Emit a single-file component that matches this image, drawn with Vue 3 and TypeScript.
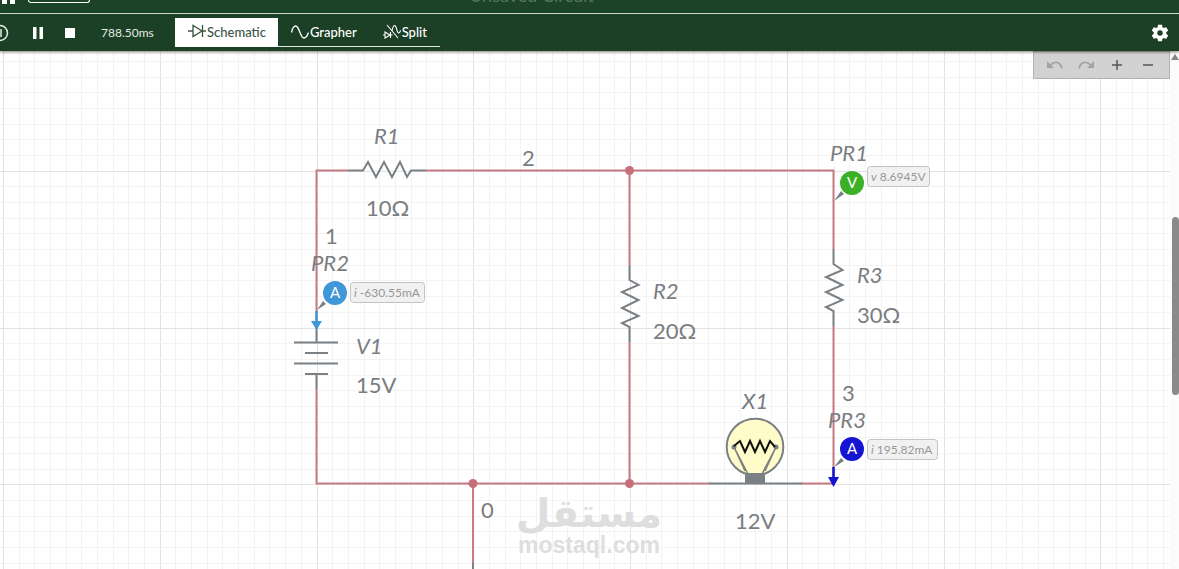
<script setup lang="ts">
import { ref } from 'vue'

interface GridLine { pos: number; major: boolean }
interface Label { text: string; x: number; y: number; name?: boolean }
interface Probe {
  letter: string
  color: string
  x: number
  y: number
  tagX: number
  tagY: number
  tagW: number
  unit: string
  value: string
}

type View = 'schematic' | 'grapher' | 'split'
const view = ref<View>('schematic')

const cell = 156.75 / 10
const gridLines = (start: number, count: number): GridLine[] =>
  Array.from({ length: count }, (_, i) => ({
    pos: Math.round(start + i * cell),
    major: i % 10 === 0,
  }))

const columns = gridLines(3, 240)
const rows = gridLines(14, 140)

const labels: Label[] = [
  { text: 'R1', x: 374, y: 144, name: true },
  { text: '10Ω', x: 366, y: 216 },
  { text: '2', x: 522, y: 166 },
  { text: '1', x: 325, y: 244 },
  { text: 'PR2', x: 311, y: 271, name: true },
  { text: 'V1', x: 356, y: 354, name: true },
  { text: '15V', x: 356, y: 393 },
  { text: 'R2', x: 653, y: 299, name: true },
  { text: '20Ω', x: 653, y: 339 },
  { text: 'PR1', x: 830, y: 161, name: true },
  { text: 'R3', x: 857, y: 283, name: true },
  { text: '30Ω', x: 857, y: 323 },
  { text: '3', x: 842, y: 401 },
  { text: 'PR3', x: 828, y: 428, name: true },
  { text: 'X1', x: 742, y: 409, name: true },
  { text: '12V', x: 735, y: 529 },
  { text: '0', x: 481, y: 518 },
]

const probes: Probe[] = [
  { letter: 'A', color: '#3f97d8', x: 335, y: 293, tagX: 350, tagY: 282, tagW: 74, unit: 'i', value: '-630.55mA' },
  { letter: 'V', color: '#3cb027', x: 852, y: 183, tagX: 867, tagY: 166, tagW: 62, unit: 'v', value: '8.6945V' },
  { letter: 'A', color: '#1414d2', x: 852, y: 449, tagX: 867, tagY: 439, tagW: 70, unit: 'i', value: '195.82mA' },
]
</script>

<template>
  <div class="app">
    <header class="titlebar">
      <svg class="apps" width="16" height="6" viewBox="0 0 16 6" aria-hidden="true">
        <path d="M2 0h5v4H2zM10 0h5v4h-5z" fill="#fff" />
      </svg>
      <span class="plan"></span>
      <h1 class="title">Unsaved Circuit</h1>
    </header>

    <div class="toolbar">
      <button class="tool info" aria-label="Information">
        <svg width="18" height="18" viewBox="0 0 18 18" fill="none" stroke="#e6eee8" stroke-width="1.5">
          <circle cx="9" cy="9" r="7.5" />
          <path d="M10 5v8" />
        </svg>
      </button>
      <button class="tool pause" aria-label="Pause">
        <svg width="10" height="12" viewBox="0 0 10 12" fill="#fff"><path d="M0 0h3.5v12H0zM6.500 0H10v12H6.500z" /></svg>
      </button>
      <button class="tool stop" aria-label="Stop">
        <svg width="10" height="10" viewBox="0 0 10 10" fill="#fff"><path d="M0 0h10v10H0z" /></svg>
      </button>
      <span class="time">788.50ms</span>

      <div class="tabs" role="tablist">
        <button class="tab" role="tab" :class="{ active: view === 'schematic' }" :aria-selected="view === 'schematic'" @click="view = 'schematic'">
          <svg width="18" height="16" viewBox="0 0 18 16" fill="none" stroke="currentColor" stroke-width="1.3">
            <path d="M0 7h5M13 7h5M5 1.500v11L14 7zM14.500 1v12" />
          </svg>
          Schematic
        </button>
        <button class="tab" role="tab" :class="{ active: view === 'grapher' }" :aria-selected="view === 'grapher'" @click="view = 'grapher'">
          <svg width="18" height="16" viewBox="0 0 18 16" fill="none" stroke="currentColor" stroke-width="1.3" stroke-linecap="round">
            <path d="M.7 8C1.600 3.500 3 2 4.700 2c3.800 0 4.400 12 8.200 12 2.200 0 3.500-2.400 4.300-5" />
          </svg>
          Grapher
        </button>
        <button class="tab" role="tab" :class="{ active: view === 'split' }" :aria-selected="view === 'split'" @click="view = 'split'">
          <svg width="18" height="16" viewBox="0 0 18 16" fill="none" stroke="currentColor" stroke-width="1.1">
            <path d="M0 11h2M2 8v6l5-3zM7.500 8v6M7.500 11h2M4 1l11 13M9 7c.8-4 1.400-5.500 2.600-5.500C14 1.500 13.500 9 15.600 9c1 0 1.600-1.200 2-2.500" />
          </svg>
          Split
        </button>
      </div>

      <button class="tool settings" aria-label="Settings">
        <svg width="20" height="20" viewBox="0 0 24 24" fill="#fff">
          <path fill-rule="evenodd" d="M19.430 12.980c.04-.32.07-.64.07-.98s-.03-.66-.07-.98l2.110-1.650c.19-.15.24-.42.12-.64l-2-3.460c-.12-.22-.39-.3-.61-.22l-2.490 1c-.52-.4-1.080-.73-1.690-.98l-.38-2.650C14.460 2.180 14.250 2 14 2h-4c-.25 0-.46.18-.49.42l-.38 2.650c-.61.25-1.170.59-1.690.98l-2.490-1c-.23-.09-.49 0-.61.22l-2 3.460c-.13.22-.07.49.12.64l2.110 1.650c-.04.32-.07.65-.07.98s.03.66.07.98l-2.110 1.650c-.19.15-.24.42-.12.64l2 3.460c.12.22.39.3.61.22l2.490-1c.52.4 1.080.73 1.690.98l.38 2.650c.03.24.24.42.49.42h4c.25 0 .46-.18.49-.42l.38-2.650c.61-.25 1.170-.59 1.690-.98l2.490 1c.23.09.49 0 .61-.22l2-3.460c.12-.22.07-.49-.12-.64zM12 15.300A3.300 3.300 0 1 1 12 8.700a3.300 3.300 0 0 1 0 6.600z" />
        </svg>
      </button>
    </div>

    <main class="workspace">
      <div class="sheet">
        <svg class="circuit" role="img" aria-label="Circuit schematic">
          <g transform="translate(0 -51)">
            <g shape-rendering="crispEdges">
              <line v-for="c in columns" :key="'c' + c.pos" :x1="c.pos + 0.5" :x2="c.pos + 0.5" y1="51" y2="2200" :class="c.major ? 'major' : 'minor'" />
              <line v-for="r in rows" :key="'r' + r.pos" x1="0" x2="3800" :y1="r.pos + 0.5" :y2="r.pos + 0.5" :class="r.major ? 'major' : 'minor'" />
            </g>

            <g class="watermark">
              <text x="589" y="527" class="mark-ar" text-anchor="middle">مستقل</text>
              <text x="589" y="553" class="mark-en" text-anchor="middle">mostaql.com</text>
            </g>

            <g class="wire">
              <path d="M348 170.500H316.500V328M316.500 389V483.500H710M426 170.500H833.500V249M833.500 326V483.500H801M629.500 170.500V266M629.500 342V483.500M473 483.500V563" />
            </g>
            <g fill="#c66f79">
              <circle cx="629.500" cy="170.500" r="4.500" />
              <circle cx="473" cy="483.500" r="4.500" />
              <circle cx="629.500" cy="483.500" r="4.500" />
            </g>

            <g class="part">
              <path d="M348 170.500H363L368 162L376 177L384 162L392 177L400 162L407 177L411 170.500H426" />
              <path d="M629.500 266V280L638.500 285L622 292L638.500 300L622 308L638.500 316L622 323L629.500 327V342" />
              <path d="M833.500 249V264L842.500 270L826 277L842.500 285L826 292L842.500 300L826 307L833.500 311V326" />
              <path d="M316.500 328V342.500M294 342.500H338M305 353H328M294 363.500H338M305 374H328M316.500 374V389" />
              <path d="M709 483.500H802" />
              <path d="M473 563V569" />
            </g>

            <circle cx="755" cy="447" r="28.300" fill="#fffcc9" stroke="#7b8085" stroke-width="2" />
            <path d="M734 447L748 474M776 447L762 474M734 447L745 471M776 447L765 471" stroke="#7b8085" stroke-width="1.500" />
            <circle cx="734" cy="447" r="2.500" fill="#7b8085" />
            <circle cx="776" cy="447" r="2.500" fill="#7b8085" />
            <path d="M734 446L740 441L745 452L750 441L755 452L760 441L765 452L770 441L775 447" fill="none" stroke="#111" stroke-width="2" />
            <path d="M745 473H765V483.500H745z" fill="#7b8085" />

            <path d="M317 310L323 301L326 304z M834 201L841 191L844 194z M834 467L841 458L844 461z" fill="#7b8085" />
            <path d="M316.500 311V323" stroke="#3f97d8" stroke-width="2.500" />
            <path d="M311 321H322L316.500 330z" fill="#3f97d8" />
            <path d="M833.500 467V479" stroke="#1414d2" stroke-width="2.500" />
            <path d="M828 477H839L833.500 487z" fill="#1414d2" />

            <g v-for="p in probes" :key="p.value">
              <circle :cx="p.x" :cy="p.y" r="12" :fill="p.color" />
              <text :x="p.x" :y="p.y + 5" class="letter" text-anchor="middle">{{ p.letter }}</text>
              <rect :x="p.tagX + 0.5" :y="p.tagY + 0.5" :width="p.tagW" height="20" rx="3" fill="#f1f1f1" stroke="#c3c3c3" />
              <text :x="p.tagX + 4" :y="p.tagY + 15" class="reading"><tspan font-style="italic">{{ p.unit }}</tspan>{{ ' ' + p.value }}</text>
            </g>

            <text v-for="l in labels" :key="l.text" :x="l.x" :y="l.y" class="label" :class="{ name: l.name }">{{ l.text }}</text>
          </g>
        </svg>

        <div class="edit">
          <button aria-label="Undo" disabled>
            <svg width="18" height="12" viewBox="0 0 18 12"><path d="M1 2v7h7z" fill="#a3a3a3" /><path d="M4.500 6C8 2 14 2 16 9.500" fill="none" stroke="#a3a3a3" stroke-width="1.800" /></svg>
          </button>
          <button aria-label="Redo" disabled>
            <svg width="18" height="12" viewBox="0 0 18 12"><path d="M17 2v7h-7z" fill="#a3a3a3" /><path d="M13.500 6C10 2 4 2 2 9.500" fill="none" stroke="#a3a3a3" stroke-width="1.800" /></svg>
          </button>
          <button aria-label="Zoom in">
            <svg width="12" height="12" viewBox="0 0 12 12" stroke="#555" stroke-width="1.500"><path d="M6 1v10M1 6h10" /></svg>
          </button>
          <button aria-label="Zoom out">
            <svg width="12" height="12" viewBox="0 0 12 12" stroke="#555" stroke-width="1.500"><path d="M1 6h10" /></svg>
          </button>
        </div>
      </div>

      <div class="scroll">
        <svg width="8" height="6" viewBox="0 0 8 6"><path d="M4 0l4 6H0z" fill="#858585" /></svg>
        <div class="thumb"></div>
      </div>
    </main>
  </div>
</template>

<style>
body {
  margin: 0;
}
</style>

<style scoped>
.app {
  display: flex;
  flex-direction: column;
  height: 100vh;
  overflow: hidden;
  font-family: Lato, "Liberation Sans", sans-serif;
  background: #fff;
}

button {
  margin: 0;
  padding: 0;
  border: 0;
  background: none;
  font: inherit;
  color: inherit;
  display: flex;
  align-items: center;
  justify-content: center;
}

.titlebar {
  display: flex;
  align-items: flex-start;
  height: 13px;
  flex: none;
  overflow: hidden;
  background: #1c4227;
  border-bottom: 1px solid #e4ece6;
}

.plan {
  box-sizing: border-box;
  width: 62px;
  height: 3px;
  margin-left: 12px;
  border: 1px solid #fff;
  border-top: 0;
  border-radius: 0 0 3px 3px;
}

.title {
  flex: 1;
  margin: -15px 0 0;
  padding-right: 206px;
  text-align: center;
  font-size: 18px;
  line-height: 20px;
  font-weight: 400;
  color: #56755f;
}

.toolbar {
  position: relative;
  z-index: 1;
  display: flex;
  align-items: center;
  flex: none;
  height: 37px;
  background: #1c4025;
  color: #fff;
  box-shadow: 0 1px 3px rgba(0, 0, 0, 0.5);
}

.info {
  margin-left: -9px;
}

.pause {
  margin-left: 24px;
}

.stop {
  margin-left: 22px;
}

.time {
  width: 74px;
  margin-left: 26px;
  font-size: 12px;
  color: #e3ebe5;
}

.tabs {
  display: flex;
  height: 29px;
}

.tab {
  gap: 1px;
  padding: 0 13px;
  font-size: 13px;
  font-weight: 500;
  border-bottom: 1px solid #dfe8e1;
}

.tab.active {
  padding-right: 12px;
  background: #fff;
  color: #3c5445;
  border-bottom-color: #fff;
}

.settings {
  margin-left: auto;
  margin-right: 9px;
}

.workspace {
  display: flex;
  flex: 1;
  min-height: 0;
}

.sheet {
  position: relative;
  flex: 1;
  min-width: 0;
}

.circuit {
  display: block;
  width: 100%;
  height: 100%;
}

.minor {
  stroke: #f3f3f3;
}

.major {
  stroke: #e2e2e2;
}

.wire path {
  fill: none;
  stroke: #c77b84;
  stroke-width: 2;
}

.part path {
  fill: none;
  stroke: #7b8085;
  stroke-width: 2;
}

.label {
  font-size: 22px;
  fill: #7a7d81;
}

.name {
  font-style: italic;
}

.letter {
  font-size: 15px;
  fill: #fff;
}

.reading {
  font-size: 12px;
  fill: #979797;
}

.watermark {
  fill: #dedede;
  font-weight: 700;
}

.mark-ar {
  font-family: "DejaVu Sans", sans-serif;
  font-size: 40px;
}

.mark-en {
  font-family: "Liberation Sans", Arial, sans-serif;
  font-size: 23px;
}

.edit {
  position: absolute;
  top: 0;
  right: 0;
  box-sizing: border-box;
  display: grid;
  grid-template-columns: repeat(4, 1fr);
  width: 137px;
  height: 28px;
  padding: 0 5px;
  background: #d2d2d2;
  border: 1px solid #b2b2b2;
}

.scroll {
  flex: none;
  width: 9px;
  display: flex;
  flex-direction: column;
  align-items: flex-end;
  padding-top: 3px;
  box-sizing: border-box;
  background: #fbfbfb;
}

.scroll svg {
  flex: none;
}

.thumb {
  flex: none;
  width: 7px;
  height: 178px;
  margin-top: 157px;
  border-radius: 4px;
  background: #8a8a8a;
}
</style>
